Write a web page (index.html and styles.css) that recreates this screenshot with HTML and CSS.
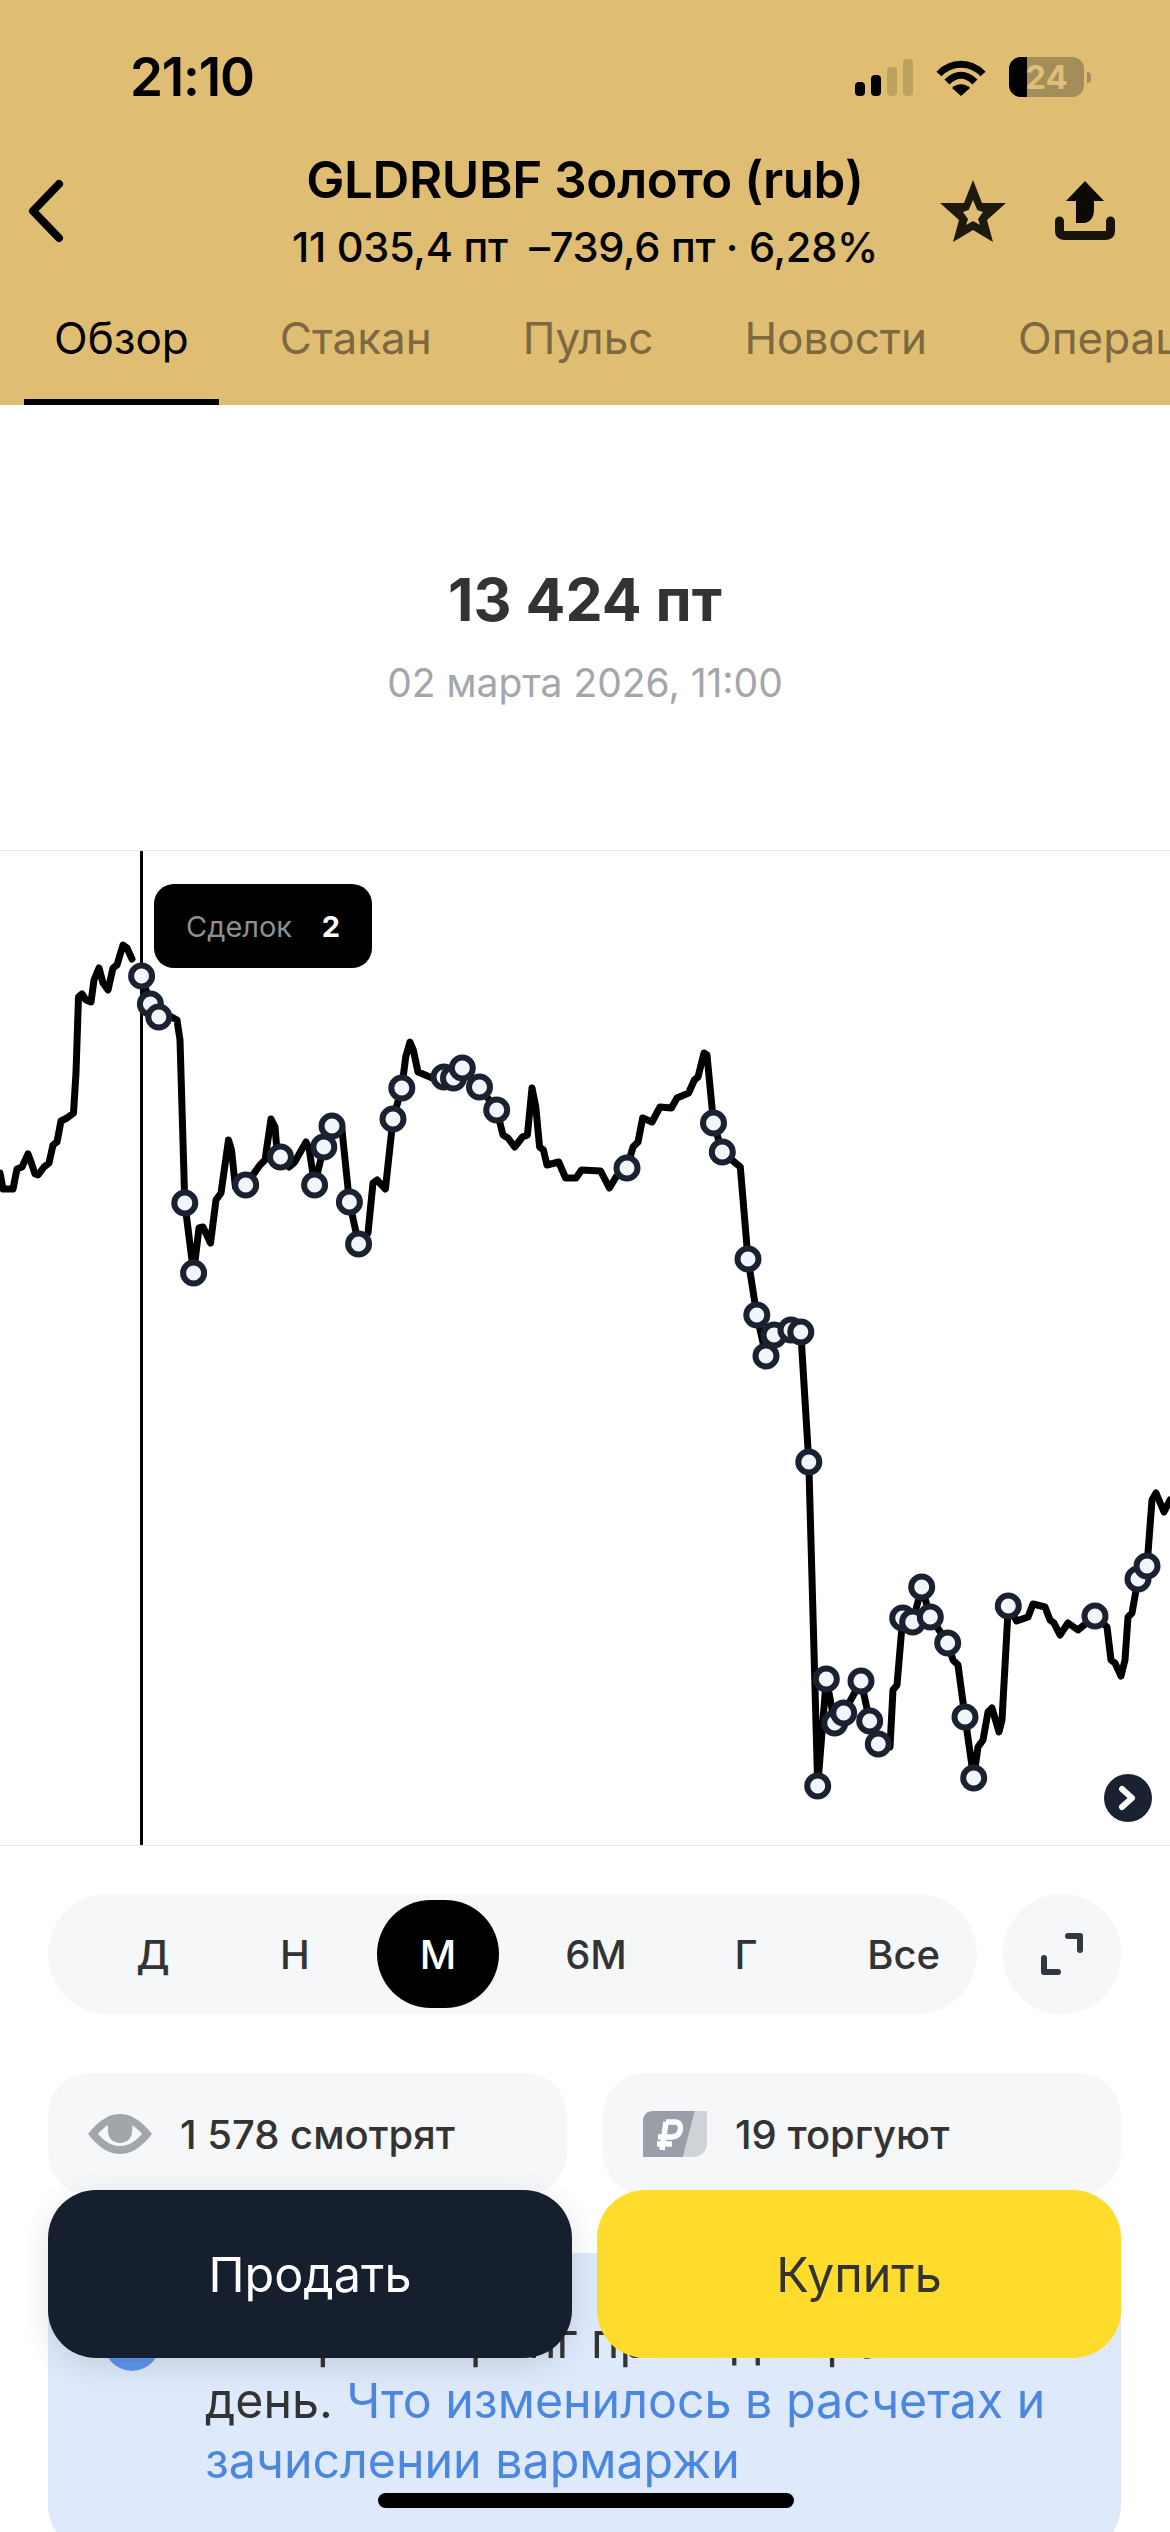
FILE: index.html
```html
<!DOCTYPE html>
<html lang="ru">
<head>
  <meta charset="UTF-8" />
  <meta name="viewport" content="width=device-width, initial-scale=1" />
  <title>GLDRUBF Золото (rub)</title>
  <link rel="stylesheet" href="styles.css">
</head>
<body>

<div class="screen">
  <header class="top">
    <div class="status">
      <span class="time">21:10</span>
      <div class="status-icons">
        <svg class="signal" width="58" height="37" viewBox="0 0 58 37">
          <rect x="0" y="23" width="10" height="14" rx="4" fill="#000"/>
          <rect x="16" y="16" width="10" height="21" rx="4" fill="#000"/>
          <rect x="32" y="8" width="10" height="29" rx="4" fill="#bda25f"/>
          <rect x="48" y="0" width="10" height="37" rx="4" fill="#bda25f"/>
        </svg>
        <svg class="wifi" width="50" height="37" viewBox="0 0 50 37">
          <path d="M3 15 C15 2 35 2 47 15" fill="none" stroke="#000" stroke-width="7"/>
          <path d="M11 23 C20 14 30 14 39 23" fill="none" stroke="#000" stroke-width="7"/>
          <path d="M25 37 L16 29 C21 24 29 24 34 29 Z" fill="#000"/>
        </svg>
        <div class="battery">
          <div class="battery-body">
            <span class="battery-fill"></span>
            <span class="battery-num">24</span>
          </div>
          <span class="battery-nub"></span>
        </div>
      </div>
    </div>

    <div class="title-row">
      <svg class="back" width="40" height="64" viewBox="0 0 40 64">
        <path d="M33 5 L7 32 L33 59" fill="none" stroke="#000" stroke-width="8" stroke-linecap="round" stroke-linejoin="round"/>
      </svg>
      <div class="title-text">
        <h1>GLDRUBF Золото (rub)</h1>
        <p>11 035,4 пт&nbsp; –739,6 пт · 6,28%</p>
      </div>
      <div class="title-actions">
        <svg width="66" height="64" viewBox="0 0 66 64">
          <path fill="#1e190e" fill-rule="evenodd" d="M33 1 L42 24 L66 24 L47 41 L53 63 L33 51 L13 63 L19 41 L0 24 L24 24 Z M33 21 L28.7 31 L23 33 L28 40 L26 46 L33 42 L40 46 L38 40 L43 33 L37.3 31 Z"/>
        </svg>
        <svg width="62" height="62" viewBox="0 0 62 62">
          <path d="M31 1 L50 21 L40 21 L40 30 C40 38 35 43 30 43 L22 43 L22 21 L12 21 Z" fill="#0c0a05"/>
          <path d="M5.5 41 L5.5 51 C5.5 54 7 55.5 10 55.5 L52 55.5 C55 55.5 56.5 54 56.5 51 L56.5 41" fill="none" stroke="#17130a" stroke-width="9" stroke-linecap="round"/>
        </svg>
      </div>
    </div>

    <nav class="tabs">
      <a class="tab active">Обзор</a>
      <a class="tab">Стакан</a>
      <a class="tab">Пульс</a>
      <a class="tab">Новости</a>
      <a class="tab">Операции</a>
    </nav>
  </header>

  <section class="quote">
    <div class="quote-price">13 424 пт</div>
    <div class="quote-date">02 марта 2026, 11:00</div>
  </section>

  <section class="chart">
    <svg class="chart-svg" width="1170" height="994" viewBox="0 851 1170 994">
      <line x1="141.5" y1="851" x2="141.5" y2="1845" stroke="#000" stroke-width="3"/>
      <path class="chart-line" d="M0 1173 L3 1189 L13 1189 L17 1169 L22 1167 L28 1154 L31 1162 L35 1174 L38 1175 L44 1167 L49 1163 L53 1145 L57 1142 L61 1121 L67 1118 L73.5 1113 L76 1073 L78.5 997 L82 994 L86 1000 L91 1002 L94 980 L99 968 L103 983 L108 990 L113 968 L117 965 L123 945 L127 948 L132 959
        M141.6 976 L150.4 1004 L158.8 1017 L168 1015 L177 1020 L180 1040 L184.8 1203 L193.6 1273 L199 1228 L203 1227 L210.5 1243 L216 1200 L221 1193 L228.5 1140 L231.5 1150 L235.4 1187 L245.7 1185 L260 1165 L265 1160 L271 1119 L275 1127 L277.5 1157 L280.5 1157 L289 1167 L294.7 1162 L306 1142 L309 1148 L314.6 1185 L323.8 1147 L332 1126 L341.7 1127 L349.4 1202 L358.6 1244 L368 1233 L373 1183 L377 1180 L385.4 1189 L393 1119 L401.8 1088 L405.7 1057 L410 1042 L413.3 1050 L418 1072 L432.4 1078 L444 1077 L453.5 1078 L462.3 1068 L479.5 1087 L496.7 1110 L503 1135 L508 1138 L514.7 1147 L522.4 1137 L527.4 1135 L532 1088 L535.8 1107 L539.6 1147 L543.4 1150 L547 1165 L558.7 1162 L565.6 1178 L576 1178 L581.5 1170 L600.6 1171 L609.4 1188 L616 1177 L627 1168 L633 1147 L638 1142 L642.7 1118 L652 1122 L660 1107 L671.4 1108 L677 1098 L688.6 1093 L694.4 1080 L698 1077 L704 1053 L707 1055 L713.5 1123 L722.3 1152 L740.3 1167 L748 1259 L756.8 1315 L766 1356 L774 1335 L791 1330 L800.8 1332 L808.8 1462 L817.7 1786 L826.3 1679 L834.7 1723 L843.7 1713 L861 1681 L869.7 1721 L878.3 1744 L890 1747 L893 1690 L897 1685 L902.7 1618 L912.7 1622 L921.7 1587 L930.3 1617 L947.7 1643 L953 1660 L958 1665 L965 1717 L973.7 1778 L978 1747 L983 1740 L988 1712 L992 1708 L999 1732 L1002 1720 L1008.3 1606 L1016.7 1621 L1028 1617 L1033 1604 L1045 1607 L1050 1620 L1054 1623 L1060 1635 L1068 1623 L1078 1630 L1095 1616 L1107 1627 L1111 1660 L1115 1663 L1121 1676 L1125 1660 L1128 1617 L1132 1613 L1138 1579 L1147 1566 L1152 1500 L1156 1493 L1164 1512 L1170 1500"/>
      <g class="chart-dots">
        <circle cx="141.6" cy="976" r="10.5"/>
        <circle cx="150.4" cy="1004" r="10.5"/>
        <circle cx="158.8" cy="1017" r="10.5"/>
        <circle cx="184.8" cy="1203" r="10.5"/>
        <circle cx="193.6" cy="1273" r="10.5"/>
        <circle cx="245.7" cy="1185" r="10.5"/>
        <circle cx="280.5" cy="1157" r="10.5"/>
        <circle cx="314.6" cy="1185" r="10.5"/>
        <circle cx="323.8" cy="1147" r="10.5"/>
        <circle cx="332" cy="1126" r="10.5"/>
        <circle cx="349.4" cy="1202" r="10.5"/>
        <circle cx="358.6" cy="1244" r="10.5"/>
        <circle cx="393" cy="1119" r="10.5"/>
        <circle cx="401.8" cy="1088" r="10.5"/>
        <circle cx="444" cy="1077" r="10.5"/>
        <circle cx="453.5" cy="1078" r="10.5"/>
        <circle cx="462.3" cy="1068" r="10.5"/>
        <circle cx="479.5" cy="1087" r="10.5"/>
        <circle cx="496.7" cy="1110" r="10.5"/>
        <circle cx="627" cy="1168" r="10.5"/>
        <circle cx="713.5" cy="1123" r="10.5"/>
        <circle cx="722.3" cy="1152" r="10.5"/>
        <circle cx="748" cy="1259" r="10.5"/>
        <circle cx="756.8" cy="1315" r="10.5"/>
        <circle cx="766" cy="1356" r="10.5"/>
        <circle cx="774" cy="1335" r="10.5"/>
        <circle cx="791" cy="1330" r="10.5"/>
        <circle cx="800.8" cy="1332" r="10.5"/>
        <circle cx="808.8" cy="1462" r="10.5"/>
        <circle cx="817.7" cy="1786" r="10.5"/>
        <circle cx="834.7" cy="1723" r="10.5"/>
        <circle cx="826.3" cy="1679" r="10.5"/>
        <circle cx="843.7" cy="1713" r="10.5"/>
        <circle cx="861" cy="1681" r="10.5"/>
        <circle cx="869.7" cy="1721" r="10.5"/>
        <circle cx="878.3" cy="1744" r="10.5"/>
        <circle cx="902.7" cy="1618" r="10.5"/>
        <circle cx="912.7" cy="1622" r="10.5"/>
        <circle cx="921.7" cy="1587" r="10.5"/>
        <circle cx="930.3" cy="1617" r="10.5"/>
        <circle cx="947.7" cy="1643" r="10.5"/>
        <circle cx="965" cy="1717" r="10.5"/>
        <circle cx="973.7" cy="1778" r="10.5"/>
        <circle cx="1008.3" cy="1606" r="10.5"/>
        <circle cx="1095" cy="1616" r="10.5"/>
        <circle cx="1138" cy="1579" r="10.5"/>
        <circle cx="1147" cy="1566" r="10.5"/>
      </g>
    </svg>

    <div class="chart-tip">
      <span class="tip-label">Сделок</span>
      <span class="tip-value">2</span>
    </div>

    <div class="chart-next">
      <svg width="22" height="26" viewBox="0 0 22 26">
        <path d="M5 4 L15 13 L5 22" fill="none" stroke="#fff" stroke-width="6" stroke-linecap="round" stroke-linejoin="round"/>
      </svg>
    </div>
  </section>

  <section class="periods">
    <div class="period-bar">
      <span class="period">Д</span>
      <span class="period">Н</span>
      <span class="period active">М</span>
      <span class="period">6М</span>
      <span class="period">Г</span>
      <span class="period period-all">Все</span>
    </div>
    <div class="expand">
      <svg width="44" height="44" viewBox="0 0 44 44">
        <path d="M28 4 L40 4 L40 18 M4 26 L4 40 L18 40" fill="none" stroke="#333840" stroke-width="6" stroke-linecap="round" stroke-linejoin="round"/>
      </svg>
    </div>
  </section>

  <section class="chips">
    <div class="chip">
      <svg width="64" height="40" viewBox="0 0 64 40">
        <path fill="#a2a5a9" fill-rule="evenodd" d="M0 20 C12 5 22 0 32 0 C42 0 52 5 64 20 C52 35 42 40 32 40 C22 40 12 35 0 20 Z M10 20 C18 29 25 32 32 32 C39 32 46 29 54 20 C50 15 47 13 44 11 C45 13 44 15 44 17 C44 24 39 29 32 29 C25 29 20 24 20 17 C20 15 20 13 20 11 C17 13 14 15 10 20 Z"/>
      </svg>
      <span>1 578 смотрят</span>
    </div>
    <div class="chip chip-trade">
      <svg width="64" height="46" viewBox="0 0 64 46">
        <path d="M10 0 L52 0 L40 46 L0 46 L0 10 C0 4 4 0 10 0 Z" fill="#9a9ea6"/>
        <path d="M52 0 L64 0 L64 32 C64 40 58 46 50 46 L40 46 Z" fill="#cfd3d8"/>
        <path d="M23 11 L32 11 C36 11 38 14 37.5 18 C37 23 33 26 29 26 L15 26 M14 33 L29 33 M23 11 L19 39" fill="none" stroke="#fff" stroke-width="5.5"/>
      </svg>
      <span>19 торгуют</span>
    </div>
  </section>

  <section class="notice">
    <span class="notice-icon"></span>
    <p>Теперь клиринг проходит раз в день. <a>Что изменилось в расчетах и зачислении вармаржи</a></p>
  </section>

  <!-- Trade buttons float over the page -->
  <div class="trade">
    <button class="trade-btn sell">Продать</button>
    <button class="trade-btn buy">Купить</button>
  </div>

  <div class="home-bar"></div>
</div>

</body>
</html>
```

FILE: styles.css
```css
* {
  box-sizing: border-box;
}
html, body {
  margin: 0;
  padding: 0;
  background: #fff;
}
.screen {
  position: relative;
  width: 1170px;
  height: 2532px;
  overflow: hidden;
  font-family: Inter, "Noto Sans", sans-serif;
  color: #333;
}

/* Gold header */
.top {
  height: 405px;
  background: #dfbd72;
  color: #000;
}
.status {
  height: 150px;
  display: flex;
  align-items: center;
  justify-content: space-between;
  padding: 4px 79px 0 130px;
}
.time {
  font-size: 53px;
  font-weight: 600;
  letter-spacing: -1.2px;
}
.status-icons {
  display: flex;
  align-items: center;
  gap: 23px;
}
.battery {
  display: flex;
  align-items: center;
  gap: 3px;
}
.battery-body {
  position: relative;
  width: 75px;
  height: 40px;
  border-radius: 12px;
  background: #a38d58;
  overflow: hidden;
  text-align: center;
}
.battery-fill {
  position: absolute;
  left: 0;
  top: 0;
  bottom: 0;
  width: 18px;
  background: #000;
}
.battery-num {
  position: relative;
  font-size: 33px;
  line-height: 40px;
  font-weight: 700;
  color: #dfbf78;
}
.battery-nub {
  width: 4px;
  height: 11px;
  border-radius: 0 4px 4px 0;
  background: #a38d58;
}

.title-row {
  height: 130px;
  display: grid;
  grid-template-columns: 1fr auto 1fr;
  align-items: center;
  padding: 0 26px;
}
.back {
  margin-bottom: 18px;
}
.title-text {
  text-align: center;
  margin-bottom: 20px;
}
.title-text h1 {
  margin: 0;
  font-size: 51px;
  line-height: 60px;
  font-weight: 600;
  letter-spacing: -0.4px;
}
.title-text p {
  margin: 14px 0 0;
  font-size: 41.6px;
  line-height: 46px;
  font-weight: 500;
  letter-spacing: -0.3px;
}
.title-actions {
  display: flex;
  justify-content: flex-end;
  align-items: center;
  gap: 48px;
  margin: 0 28px 18px 0;
}

.tabs {
  display: flex;
  gap: 31px;
  height: 125px;
  padding: 0 0 0 24px;
  overflow: hidden;
  white-space: nowrap;
}
.tab {
  flex: none;
  padding: 28px 30px 0;
  font-size: 44px;
  line-height: 60px;
  color: #7d6840;
}
.tab.active {
  color: #000;
  box-shadow: inset 0 -6px 0 #000;
}

/* Selected point */
.quote {
  height: 445px;
  text-align: center;
  padding-top: 160px;
}
.quote-price {
  font-size: 59px;
  line-height: 70px;
  font-weight: 700;
  color: #333;
}
.quote-date {
  margin-top: 23px;
  font-size: 39px;
  line-height: 50px;
  color: #a3a6ab;
}

.chart {
  position: relative;
  height: 996px;
  border-top: 1px solid #e6e6e8;
  border-bottom: 1px solid #e6e6e8;
}
.chart-svg {
  display: block;
}
.chart-line {
  fill: none;
  stroke: #000;
  stroke-width: 7;
  stroke-linejoin: round;
  stroke-linecap: round;
}
.chart-dots circle {
  fill: #f2f6fb;
  stroke: #1a2232;
  stroke-width: 6;
}
.chart-tip {
  position: absolute;
  left: 154px;
  top: 33px;
  width: 218px;
  height: 84px;
  border-radius: 20px;
  background: #000;
  display: flex;
  align-items: center;
  justify-content: space-between;
  padding: 0 32px;
  font-size: 29px;
}
.tip-label {
  color: #8f8f8f;
}
.tip-value {
  color: #fff;
  font-weight: 700;
}
.chart-next {
  position: absolute;
  left: 1104px;
  top: 923px;
  width: 48px;
  height: 48px;
  border-radius: 50%;
  background: #1a2232;
  display: flex;
  align-items: center;
  justify-content: center;
}

/* Period switch */
.periods {
  display: flex;
  justify-content: space-between;
  padding: 48px 49px 0 48px;
}
.period-bar {
  width: 929px;
  height: 120px;
  border-radius: 60px;
  background: #f6f7f8;
  display: grid;
  grid-template-columns: 142px 142px 144px 172px 128px 130px;
  padding: 0 37px 0 34px;
  align-items: center;
  justify-items: center;
  font-size: 40px;
  font-weight: 500;
  color: #333;
}
.period.active {
  width: 122px;
  height: 108px;
  border-radius: 54px;
  background: #000;
  color: #fff;
  display: flex;
  align-items: center;
  justify-content: center;
}
.period-all {
  justify-self: end;
}
.expand {
  width: 118px;
  height: 120px;
  border-radius: 59px;
  background: #f6f7f8;
  display: flex;
  align-items: center;
  justify-content: center;
}

/* Viewers and traders */
.chips {
  display: grid;
  grid-template-columns: 519px 518px;
  gap: 36px;
  padding: 59px 0 0 48px;
}
.chip {
  height: 122px;
  border-radius: 42px;
  background: #f6f7f8;
  display: flex;
  align-items: center;
  gap: 28px;
  padding: 0 0 0 40px;
  font-size: 40px;
  font-weight: 500;
  color: #333;
}

.notice {
  position: relative;
  margin: 58px 49px 0 48px;
  height: 300px;
  padding: 58px 40px 0 157px;
  border-radius: 48px;
  background: #deeafc;
}
.notice-icon {
  position: absolute;
  left: 56px;
  top: 62px;
  width: 56px;
  height: 56px;
  border-radius: 50%;
  background: #5f97ec;
}
.notice p {
  margin: 0;
  font-size: 48.3px;
  line-height: 60px;
  color: #333;
}
.notice a {
  color: #4b87e0;
}

.trade {
  position: absolute;
  left: 48px;
  right: 49px;
  top: 2190px;
  display: flex;
  gap: 25px;
}
.trade-btn {
  flex: 1;
  height: 168px;
  border: none;
  border-radius: 48px;
  font-family: inherit;
  font-size: 48.5px;
  padding: 0;
}
.sell {
  background: #161f2e;
  color: #fff;
  box-shadow: 0 8px 30px rgba(0, 0, 0, 0.12);
}
.buy {
  background: #ffdb2b;
  color: #333;
}

.home-bar {
  position: absolute;
  left: 378px;
  top: 2493px;
  width: 416px;
  height: 15px;
  border-radius: 8px;
  background: #000;
}
```
